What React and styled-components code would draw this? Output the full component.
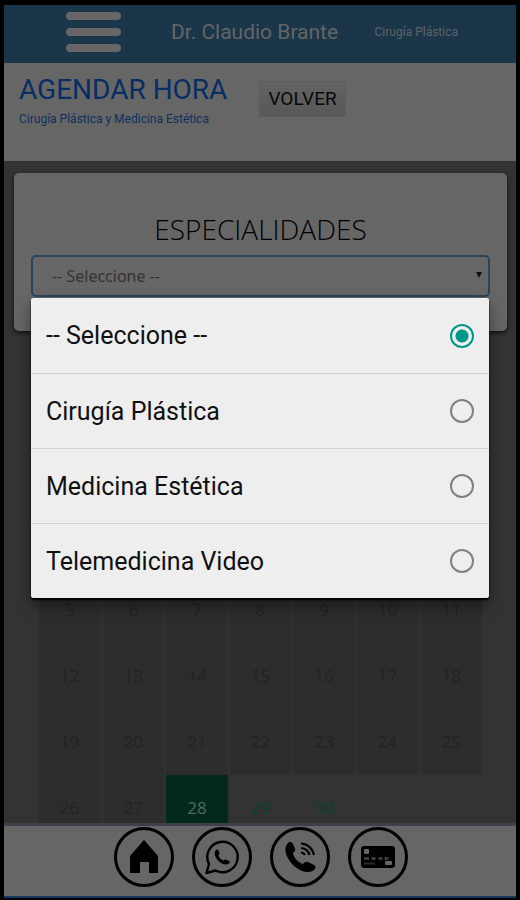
import React, { useState } from 'react'

// style
import styled, { createGlobalStyle } from 'styled-components'

const specialties = ['-- Seleccione --', 'Cirugía Plástica', 'Medicina Estética', 'Telemedicina Video']

const weeks = [
  [5, 6, 7, 8, 9, 10, 11],
  [12, 13, 14, 15, 16, 17, 18],
  [19, 20, 21, 22, 23, 24, 25],
  [26, 27, 28, 29, 30, null, null],
]

const selectedDay = 28

const dayState = (day) => {
  if (day === null) return 'empty'
  if (day === selectedDay) return 'selected'
  return day > selectedDay ? 'free' : 'past'
}

// icons
const handset =
  'M4 4C6 1 9 1.500 10 4L12 9C13 11 10 12 10 14C11 18 16 23 20 24C22 22 23 21.500 25 22L31 25C33 26 33 28 31 30C26 34 18 32 11 26C4 19 0 10 4 4Z'

const HomeIcon = () => (
  <svg width="34" height="38" viewBox="0 0 34 38">
    <path d="M17 2 31 18V35H22V24H13V35H3V18Z" fill="#000" />
  </svg>
)

const WhatsappIcon = () => (
  <svg width="36" height="36" viewBox="0 0 36 36">
    <path
      d="M5 25A15.200 15.200 0 1 1 11.500 31.500L2.500 34Z"
      fill="none"
      stroke="#000"
      strokeWidth="2.400"
      strokeLinejoin="round"
    />
    <path transform="translate(9.500 9.500) scale(.5)" d={handset} fill="#000" />
  </svg>
)

const CallIcon = () => (
  <svg width="34" height="34" viewBox="0 0 34 34">
    <path d={handset} fill="#000" />
    <path
      d="M18 3.500A14 14 0 0 1 31 15M18 8A9.500 9.500 0 0 1 26.500 15M18 12.500A5 5 0 0 1 22 15"
      fill="none"
      stroke="#000"
      strokeWidth="2.200"
    />
  </svg>
)

const CardIcon = () => (
  <svg width="36" height="36" viewBox="0 0 36 36">
    <rect x="1" y="7" width="34" height="22" rx="3" fill="#000" />
    <rect x="4" y="10" width="5" height="5" rx="1" fill="#666" />
    <path d="M4 19.500h5M11.500 19.500h4M18.500 19.500h4M24.500 19.500h4" stroke="#3a3a3a" strokeWidth="3" />
    <path d="M4 24.500h11" stroke="#2a2a2a" strokeWidth="2" />
    <rect x="25" y="22" width="7" height="4" rx="1" fill="#666" />
  </svg>
)

const App = () => {
  const [specialty, setSpecialty] = useState(specialties[0])

  return (
    <Screen>
      <GlobalStyle />

      <TopBar>
        <MenuButton aria-label="Menú">
          <span />
          <span />
          <span />
        </MenuButton>
        <Doctor>Dr. Claudio Brante</Doctor>
        <Area>Cirugía Plástica</Area>
      </TopBar>

      <Heading>
        <div>
          <Title>AGENDAR HORA</Title>
          <Subtitle>Cirugía Plástica y Medicina Estética</Subtitle>
        </div>
        <BackButton>VOLVER</BackButton>
      </Heading>

      <Main>
        <Card>
          <CardTitle htmlFor="specialty">ESPECIALIDADES</CardTitle>
          <SelectWrap>
            <Select id="specialty" value={specialty} onChange={(e) => setSpecialty(e.target.value)}>
              {specialties.map((name) => (
                <option key={name}>{name}</option>
              ))}
            </Select>
            <Arrow viewBox="0 0 8 8" aria-hidden="true">
              <path d="M1 1h6L4 7z" />
            </Arrow>
            <Menu>
              {specialties.map((name) => (
                <Option key={name}>
                  {name}
                  <Radio
                    type="radio"
                    name="option"
                    checked={name === specialty}
                    onChange={() => setSpecialty(name)}
                  />
                </Option>
              ))}
            </Menu>
          </SelectWrap>
        </Card>

        <Calendar>
          <tbody>
            {weeks.map((week) => (
              <tr key={week[0]}>
                {week.map((day, i) => (
                  <Day key={i} $state={dayState(day)}>{day}</Day>
                ))}
              </tr>
            ))}
          </tbody>
        </Calendar>
      </Main>

      <Footer>
        <RoundLink href="#inicio" aria-label="Inicio"><HomeIcon /></RoundLink>
        <RoundLink href="#whatsapp" aria-label="WhatsApp"><WhatsappIcon /></RoundLink>
        <RoundLink href="#llamar" aria-label="Llamar"><CallIcon /></RoundLink>
        <RoundLink href="#pago" aria-label="Pago"><CardIcon /></RoundLink>
      </Footer>
    </Screen>
  )
}

export default App

const GlobalStyle = createGlobalStyle`
  * {
    box-sizing: border-box;
  }
  body {
    margin: 0;
    background: #000;
    font-family: Roboto, 'Liberation Sans', sans-serif;
  }
`

const Screen = styled.div`
  display: flex;
  flex-direction: column;
  height: 100vh;
  border: solid #000;
  border-width: 5px 4px 2px;
  background: #333;
`

const TopBar = styled.header`
  display: flex;
  align-items: center;
  flex-shrink: 0;
  height: 58px;
  padding: 0 58px 4px 62px;
  background: #1b3549;
`

const MenuButton = styled.button`
  display: flex;
  flex-direction: column;
  gap: 8px;
  padding: 0;
  border: 0;
  background: none;
  span {
    width: 55px;
    height: 8px;
    border-radius: 4px;
    background: #666;
  }
`

const Doctor = styled.div`
  margin-left: 50px;
  font-size: 21px;
  color: #636668;
`

const Area = styled.div`
  margin-left: auto;
  font-size: 12px;
  color: #5c656c;
`

const Heading = styled.section`
  display: flex;
  align-items: flex-start;
  gap: 32px;
  flex-shrink: 0;
  height: 98px;
  padding: 10px 15px;
  background: #666;
`

const Title = styled.h1`
  margin: 0;
  font-size: 28px;
  font-weight: 400;
  line-height: 34px;
  color: #082d62;
`

const Subtitle = styled.p`
  margin: 4px 0 0;
  font-size: 12px;
  line-height: 16px;
  color: #0d315f;
`

const BackButton = styled.button`
  height: 36px;
  margin-top: 8px;
  padding: 0 8px;
  border: 1px solid #5b5b5b;
  border-radius: 2px;
  background: linear-gradient(#636363, #585858);
  font-family: inherit;
  font-size: 19px;
  line-height: 32px;
  color: #080808;
`

const Main = styled.main`
  flex: 1;
  min-height: 0;
  padding: 12px 9px 0 10px;
  overflow: hidden;
`

const Card = styled.section`
  display: flex;
  flex-direction: column;
  padding: 38px 17px 34px;
  border-radius: 5px;
  background: #666;
  box-shadow: 0 2px 4px #111;
`

const CardTitle = styled.label`
  margin-bottom: 8px;
  font-family: 'Open Sans', sans-serif;
  font-size: 28px;
  font-weight: 300;
  line-height: 36px;
  text-align: center;
  color: #000;
`

const SelectWrap = styled.div`
  position: relative;
`

const Select = styled.select`
  display: block;
  width: 100%;
  height: 42px;
  padding: 0 19px;
  border: 2px solid #29455a;
  border-radius: 5px;
  outline: 0;
  appearance: none;
  background: #666;
  font-family: 'Noto Sans', sans-serif;
  font-size: 16px;
  color: #333;
`

const Arrow = styled.svg`
  position: absolute;
  top: 16px;
  right: 7px;
  width: 8px;
  height: 8px;
  fill: #111;
  pointer-events: none;
`

const Menu = styled.div`
  position: absolute;
  z-index: 1;
  top: 100%;
  left: 0;
  right: 1px;
  margin-top: 1px;
  border-radius: 2px;
  background: #eee;
  box-shadow: 0 2px 2px #000, 0 8px 16px rgba(0, 0, 0, 0.4);
`

const Option = styled.label`
  display: flex;
  align-items: center;
  justify-content: space-between;
  height: 75px;
  padding: 0 15px;
  font-size: 25px;
  color: #111;
  & + & {
    border-top: 1px solid #d2d2d2;
  }
`

const Radio = styled.input`
  width: 24px;
  height: 24px;
  margin: 0;
  border: 2px solid #808080;
  border-radius: 50%;
  appearance: none;
  &:checked {
    border-color: #009788;
    background: radial-gradient(circle, #009788 0 6px, transparent 7px);
  }
`

const Calendar = styled.table`
  width: calc(100% - 48px);
  margin: 246px 24px 0;
  border-spacing: 0;
  table-layout: fixed;
  font-family: 'Open Sans', sans-serif;
  font-size: 17px;
`

const dayColors = {
  past: 'background: #2d2d2d; color: #232323;',
  selected: 'background: #03291b; color: #516a60;',
  free: 'color: #0c4029;',
  empty: '',
}

const Day = styled.td`
  height: 66px;
  padding: 0 0 2px;
  border: solid #313131;
  border-width: 0 1px;
  text-align: center;
  ${(props) => dayColors[props.$state]}
`

const Footer = styled.nav`
  display: flex;
  justify-content: center;
  gap: 18px;
  flex-shrink: 0;
  height: 75px;
  padding: 1px 0 0 2px;
  border-top: 3px solid #3c4048;
  border-bottom: 2px solid #17375c;
  background: #666;
`

const RoundLink = styled.a`
  display: flex;
  align-items: center;
  justify-content: center;
  width: 60px;
  height: 60px;
  border: 3px solid #000;
  border-radius: 50%;
`
